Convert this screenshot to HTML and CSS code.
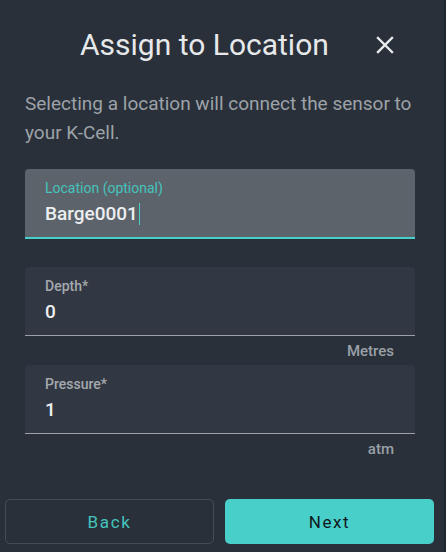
FILE: index.html
```html
<!DOCTYPE html>
<html lang="en">
<head>
    <meta charset="UTF-8">
    <meta name="viewport" content="width=device-width, initial-scale=1.0">
    <title>Assign to Location</title>
    <link rel="stylesheet" href="styles.css">
</head>
<body>
    <div class="dialog">
        <div class="header">
            <h1>Assign to Location</h1>
            <button class="close" aria-label="Close">
                <svg width="18" height="18" viewBox="0 0 18 18">
                    <path d="M2 2L16 16M16 2L2 16" stroke="#e8eaec" stroke-width="2.4" stroke-linecap="square"/>
                </svg>
            </button>
        </div>

        <p class="intro">Selecting a location will connect the sensor to your K-Cell.</p>

        <div class="field active">
            <div class="field-label">Location (optional)</div>
            <div class="field-value">Barge0001<span class="caret"></span></div>
        </div>

        <div class="field spaced">
            <div class="field-label">Depth*</div>
            <div class="field-value">0</div>
        </div>
        <div class="unit">Metres</div>

        <div class="field">
            <div class="field-label">Pressure*</div>
            <div class="field-value">1</div>
        </div>
        <div class="unit">atm</div>

        <div class="actions">
            <button class="btn btn-back">Back</button>
            <button class="btn btn-next">Next</button>
        </div>
    </div>
</body>
</html>
```

FILE: styles.css
```css
html, body {
    margin: 0;
    padding: 0;
    height: 100%;
    background-color: #1f252c;
}

body {
    font-family: Roboto, "Noto Sans", Arial, sans-serif;
    overflow: hidden;
}

.dialog {
    width: 444px;
    height: 552px;
    background-color: #29303a;
    box-sizing: border-box;
    padding: 28px 0 0 0;
}

.header {
    display: flex;
    align-items: center;
    justify-content: space-between;
    padding: 0 50px 0 80px;
    height: 34px;
}

h1 {
    margin: 0;
    font-size: 30px;
    line-height: 34px;
    font-weight: 400;
    color: #e6e8ea;
}

.close {
    background: none;
    border: none;
    padding: 0;
    width: 18px;
    height: 18px;
    cursor: pointer;
}

.intro {
    margin: 27px 29px 0 25px;
    font-size: 19px;
    line-height: 29px;
    color: #9da2a8;
}

.field {
    margin: 22px 29px 0 25px;
    height: 69px;
    box-sizing: border-box;
    padding: 10px 20px 0 20px;
    background-color: #323843;
    border-radius: 4px 4px 0 0;
    border-bottom: 1px solid #9ba1a7;
}

.field.active {
    background-color: #5c636b;
    height: 70px;
    border-bottom: 2px solid #48cfc9;
}

.field.spaced {
    margin-top: 28px;
}

.unit + .field {
    margin-top: 0;
}

.field-label {
    font-size: 14px;
    line-height: 18px;
    font-weight: 500;
    color: #a4a9ae;
}

.active .field-label {
    font-weight: 400;
    color: #45c3bd;
}

.field-value {
    margin-top: 6px;
    font-size: 19px;
    line-height: 22px;
    font-weight: 500;
    color: #eceef0;
}

.caret {
    display: inline-block;
    width: 1px;
    height: 22px;
    margin-left: 1px;
    vertical-align: top;
    background-color: #48cfc9;
}

.unit {
    height: 29px;
    margin: 0 50px 0 25px;
    text-align: right;
    font-size: 15px;
    line-height: 30px;
    font-weight: 500;
    color: #9aa0a6;
}

.actions {
    display: grid;
    grid-template-columns: 1fr 1fr;
    gap: 11px;
    margin: 36px 10px 0 5px;
}

.btn {
    height: 45px;
    border-radius: 5px;
    font-family: Roboto, "Noto Sans", Arial, sans-serif;
    font-size: 17px;
    font-weight: 400;
    letter-spacing: 1.6px;
    cursor: pointer;
}

.btn-back {
    background: transparent;
    border: 1px solid #454c56;
    color: #45c3bd;
}

.btn-next {
    background-color: #48cfc9;
    border: none;
    color: #0e1a1c;
}
```
